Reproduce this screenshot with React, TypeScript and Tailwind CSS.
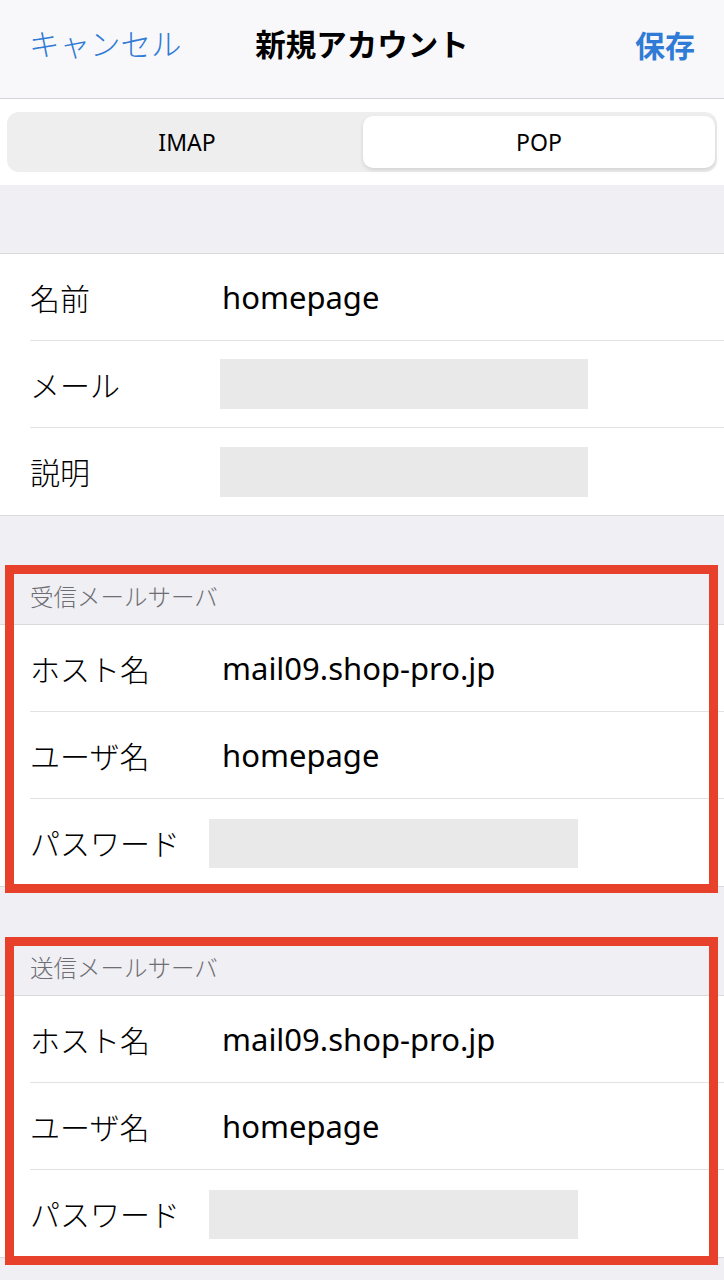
import React from 'react';

const jp = { fontFamily: '"Noto Sans CJK JP", "Noto Sans", sans-serif' };
const latin = { fontFamily: '"Noto Sans", "Noto Sans CJK JP", sans-serif' };

type Row = { label: string; value?: string; blank?: 'wide' | 'pw' };

const accountRows: Row[] = [
  { label: '名前', value: 'homepage' },
  { label: 'メール', blank: 'wide' },
  { label: '説明', blank: 'wide' },
];

const serverRows: Row[] = [
  { label: 'ホスト名', value: 'mail09.shop-pro.jp' },
  { label: 'ユーザ名', value: 'homepage' },
  { label: 'パスワード', blank: 'pw' },
];

const FormRows = ({ rows }: { rows: Row[] }) => (
  <div className="bg-white border-t border-b border-[#d9d9dd]">
    {rows.map((row, i) => (
      <div key={row.label} className="pl-[30px]">
        <div
          className={`h-[87px] flex items-center ${
            i < rows.length - 1 ? 'border-b border-[#e2e2e5]' : ''
          }`}
        >
          <span className="text-[30px] font-light text-black w-[190px] shrink-0" style={jp}>
            {row.label}
          </span>
          {row.value && (
            <span className="text-[31px] text-black pl-[2px]" style={latin}>
              {row.value}
            </span>
          )}
          {row.blank === 'wide' && <div className="w-[368px] h-[50px] bg-[#e9e9e9]" />}
          {row.blank === 'pw' && <div className="-ml-[11px] w-[369px] h-[49px] bg-[#e9e9e9] mt-[2px]" />}
        </div>
      </div>
    ))}
  </div>
);

const ServerSection = ({ title, top }: { title: string; top: string }) => (
  <div className="relative">
    <div className="h-[108px] flex items-end pl-[30px] pb-[13px]">
      <span className="text-[23.5px] font-light leading-[30px] text-[#6d6d72]" style={jp}>
        {title}
      </span>
    </div>
    <FormRows rows={serverRows} />
    <div
      className={`absolute left-[5px] w-[713px] h-[328px] border-[9px] border-[#e8412b] pointer-events-none ${top}`}
    />
  </div>
);

export default function App() {
  return (
    <div className="w-[724px] h-[1280px] overflow-hidden bg-[#efeff4]" style={jp}>
      {/* nav bar */}
      <div className="h-[99px] bg-[#f8f8fa] border-b border-[#d4d4d7]">
        <div className="h-[88px] grid grid-cols-[1fr_auto_1fr] items-center px-[29px]">
          <span className="text-[30.5px] font-light text-[#2f7bd6]">キャンセル</span>
          <span className="text-[30.5px] font-bold text-black">新規アカウント</span>
          <span className="text-[30px] font-bold text-[#2f7bd6] text-right">保存</span>
        </div>
      </div>

      {/* segmented control */}
      <div className="bg-white h-[86px] px-[7px] pt-[13px]">
        <div className="h-[60px] rounded-[12px] bg-[#eeeeef] grid grid-cols-2 p-[4px] pr-[2px]">
          <div className="flex items-center justify-center text-[23px] text-black" style={latin}>
            IMAP
          </div>
          <div
            className="flex items-center justify-center rounded-[10px] bg-white text-[23px] text-black shadow-[0_2px_4px_rgba(0,0,0,0.12)]"
            style={latin}
          >
            POP
          </div>
        </div>
      </div>

      {/* account */}
      <div className="h-[68px]" />
      <FormRows rows={accountRows} />

      <ServerSection title="受信メールサーバ" top="top-[49px]" />
      <ServerSection title="送信メールサーバ" top="top-[50px]" />
    </div>
  );
}
